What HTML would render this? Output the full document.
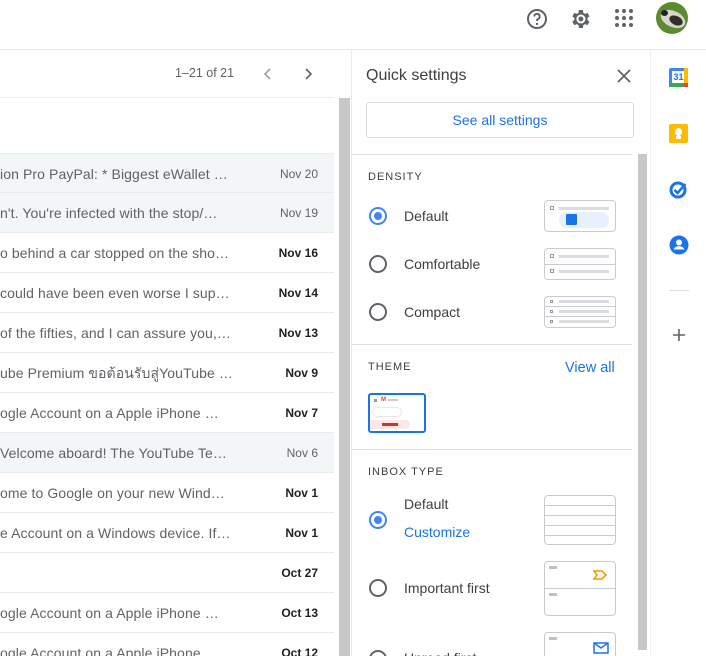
<!DOCTYPE html>
<html><head><meta charset="utf-8"><style>
*{box-sizing:border-box;margin:0;padding:0}
html,body{width:706px;height:656px;overflow:hidden}
body{background:#fff;font-family:"Liberation Sans","Noto Sans CJK SC",sans-serif;position:relative;color:#202124}
.a{position:absolute}
.row{position:absolute;left:0;width:334px;height:40px;border-bottom:1px solid #e8eaed;font-size:14px;color:#5f6368;line-height:40px;white-space:nowrap;overflow:hidden}
.row.r{background:#f2f6f6}
.row .t{position:absolute;left:0;letter-spacing:.1px}
.row .d{position:absolute;right:16px;font-size:12px;color:#5f6368}
.row.u .d{font-weight:bold;color:#202124}
.lbl{font-size:11px;letter-spacing:1px;color:#3c4043;font-weight:500}
.opt{font-size:14px;color:#3c4043}
.rad{position:absolute;width:18px;height:18px;border-radius:50%;border:2px solid #5f6368}
.rad.on{border-color:#4285f4}
.rad.on:after{content:"";position:absolute;left:3px;top:3px;width:8px;height:8px;border-radius:50%;background:#4285f4}
.box{position:absolute;border:1px solid #c8cbd0;border-radius:4px;background:#fff}
.sep{position:absolute;left:352px;width:280px;height:1px;background:#e0e0e0}
</style></head><body>
<svg class="a" style="left:525px;top:7px" width="24" height="24" viewBox="0 0 24 24"><circle cx="12" cy="12" r="9" fill="none" stroke="#5f6368" stroke-width="2"/><path d="M9.3 9.5a2.7 2.7 0 1 1 3.7 2.5c-.7.3-1 .8-1 1.5v.5" fill="none" stroke="#5f6368" stroke-width="2"/><circle cx="12" cy="17" r="1.2" fill="#5f6368"/></svg>
<svg class="a" style="left:568px;top:7px" width="24" height="24" viewBox="0 0 24 24"><path fill="#5f6368" d="M19.4 13a7.5 7.5 0 0 0 0-2l2.1-1.6-2-3.5-2.5 1a7 7 0 0 0-1.7-1L14.9 3h-4l-.4 2.9a7 7 0 0 0-1.7 1l-2.5-1-2 3.5L6.4 11a7.5 7.5 0 0 0 0 2l-2.1 1.6 2 3.5 2.5-1a7 7 0 0 0 1.7 1l.4 2.9h4l.4-2.9a7 7 0 0 0 1.7-1l2.5 1 2-3.5zM12.9 16.5a4.5 4.5 0 1 1 0-9 4.5 4.5 0 0 1 0 9z"/><circle cx="12.9" cy="12" r="2.5" fill="#5f6368"/></svg>
<svg class="a" style="left:614px;top:8px" width="20" height="20" viewBox="0 0 20 20" fill="#5f6368"><circle cx="3" cy="3" r="2"/><circle cx="10" cy="3" r="2"/><circle cx="17" cy="3" r="2"/><circle cx="3" cy="10" r="2"/><circle cx="10" cy="10" r="2"/><circle cx="17" cy="10" r="2"/><circle cx="3" cy="17" r="2"/><circle cx="10" cy="17" r="2"/><circle cx="17" cy="17" r="2"/></svg>
<div class="a" style="left:656px;top:2px;width:32px;height:32px;border-radius:50%;overflow:hidden;background:#5c8a2e"><div class="a" style="left:4px;top:9px;width:26px;height:16px;border-radius:50%;background:#d5d5cc;transform:rotate(25deg)"></div><div class="a" style="left:13px;top:14px;width:14px;height:9px;border-radius:50%;background:#2f2f28;transform:rotate(25deg)"></div><div class="a" style="left:5px;top:8px;width:7px;height:6px;border-radius:50%;background:#222"></div></div>
<div class="a" style="left:0;top:49px;width:706px;height:1px;background:#e8eaed"></div>
<div class="a" style="left:175px;top:66px;font-size:12.5px;color:#5f6368">1–21 of 21</div>
<svg class="a" style="left:262px;top:67px" width="12" height="14" viewBox="0 0 12 14"><path d="M8 2L3 7l5 5" fill="none" stroke="#9aa0a6" stroke-width="1.6"/></svg>
<svg class="a" style="left:302px;top:67px" width="12" height="14" viewBox="0 0 12 14"><path d="M4 2l5 5-5 5" fill="none" stroke="#5f6368" stroke-width="1.6"/></svg>
<div class="a" style="left:0;top:97px;width:334px;height:1px;background:#eceff1"></div>
<div class="a" style="left:339px;top:98px;width:11px;height:558px;background:#c8c8c8"></div>
<div class="row r" style="top:153px;border-top:1px solid #e8eaed"><span class="t">ion Pro PayPal: * Biggest eWallet …</span><span class="d">Nov 20</span></div>
<div class="row r" style="top:193px"><span class="t">n't. You're infected with the stop/…</span><span class="d">Nov 19</span></div>
<div class="row u" style="top:233px"><span class="t">o behind a car stopped on the sho…</span><span class="d">Nov 16</span></div>
<div class="row u" style="top:273px"><span class="t">could have been even worse I sup…</span><span class="d">Nov 14</span></div>
<div class="row u" style="top:313px"><span class="t">of the fifties, and I can assure you,…</span><span class="d">Nov 13</span></div>
<div class="row u" style="top:353px"><span class="t">ube Premium ขอต้อนรับสู่YouTube …</span><span class="d">Nov 9</span></div>
<div class="row u" style="top:393px"><span class="t">ogle Account on a Apple iPhone …</span><span class="d">Nov 7</span></div>
<div class="row r" style="top:433px"><span class="t">Velcome aboard! The YouTube Te…</span><span class="d">Nov 6</span></div>
<div class="row u" style="top:473px"><span class="t">ome to Google on your new Wind…</span><span class="d">Nov 1</span></div>
<div class="row u" style="top:513px"><span class="t">e Account on a Windows device. If…</span><span class="d">Nov 1</span></div>
<div class="row u" style="top:553px"><span class="t"></span><span class="d">Oct 27</span></div>
<div class="row u" style="top:593px"><span class="t">ogle Account on a Apple iPhone …</span><span class="d">Oct 13</span></div>
<div class="row u" style="top:633px"><span class="t">ogle Account on a Apple iPhone …</span><span class="d">Oct 12</span></div>
<div class="a" style="left:351px;top:50px;width:1px;height:606px;background:#e8eaed"></div>
<div class="a" style="left:366px;top:67px;font-size:16px;color:#3c4043">Quick settings</div>
<svg class="a" style="left:617px;top:69px" width="14" height="14" viewBox="0 0 14 14"><path d="M1 1l12 12M13 1L1 13" stroke="#5f6368" stroke-width="1.8"/></svg>
<div class="a" style="left:366px;top:102px;width:268px;height:36px;border:1px solid #dadce0;border-radius:4px;text-align:center;line-height:34px;font-size:14px;color:#1a73e8;font-weight:500">See all settings</div>
<div class="sep" style="top:154px"></div>
<div class="a" style="left:638px;top:154px;width:9px;height:496px;background:#c8c8c8"></div>
<div class="a lbl" style="left:368px;top:171px">DENSITY</div>
<div class="rad on" style="left:369px;top:207px"></div><div class="a opt" style="left:404px;top:208px">Default</div>
<div class="rad" style="left:369px;top:255px"></div><div class="a opt" style="left:404px;top:256px">Comfortable</div>
<div class="rad" style="left:369px;top:303px"></div><div class="a opt" style="left:404px;top:304px">Compact</div>
<div class="box" style="left:544px;top:200px;width:72px;height:32px"><div class="a" style="left:5px;top:5px;width:4px;height:4px;border:1px solid #999"></div><div class="a" style="left:14px;top:6px;width:50px;height:3px;background:#dadce0"></div><div class="a" style="left:14px;top:11px;width:50px;height:16px;border-radius:8px;background:#e8f0fe"></div><div class="a" style="left:21px;top:13px;width:11px;height:11px;background:#1a73e8;border-radius:1px"></div></div>
<div class="box" style="left:544px;top:248px;width:72px;height:32px"><div class="a" style="left:0;top:15px;width:70px;height:1px;background:#c8cbd0"></div><div class="a" style="left:5px;top:5px;width:4px;height:4px;border:1px solid #999"></div><div class="a" style="left:14px;top:6px;width:50px;height:3px;background:#dadce0"></div><div class="a" style="left:5px;top:20px;width:4px;height:4px;border:1px solid #999"></div><div class="a" style="left:14px;top:21px;width:50px;height:3px;background:#dadce0"></div></div>
<div class="box" style="left:544px;top:296px;width:72px;height:32px"><div class="a" style="left:0;top:9px;width:70px;height:1px;background:#c8cbd0"></div><div class="a" style="left:0;top:19px;width:70px;height:1px;background:#c8cbd0"></div><div class="a" style="left:5px;top:3px;width:3px;height:3px;border:1px solid #999"></div><div class="a" style="left:5px;top:13px;width:3px;height:3px;border:1px solid #999"></div><div class="a" style="left:5px;top:23px;width:3px;height:3px;border:1px solid #999"></div><div class="a" style="left:14px;top:3px;width:50px;height:3px;background:#dadce0"></div><div class="a" style="left:14px;top:13px;width:50px;height:3px;background:#dadce0"></div><div class="a" style="left:14px;top:23px;width:50px;height:3px;background:#dadce0"></div></div>
<div class="sep" style="top:344px"></div>
<div class="a lbl" style="left:368px;top:361px">THEME</div>
<div class="a" style="left:565px;top:360px;font-size:14.5px;color:#1a73e8;font-weight:500">View all</div>
<div class="a" style="left:368px;top:393px;width:58px;height:40px;border:2px solid #1a73e8;border-radius:3px;background:#fff;overflow:hidden"><div class="a" style="left:4px;top:4px;width:3px;height:3px;background:#999"></div><div class="a" style="left:11px;top:2px;font-size:6px;color:#ea4335;font-weight:bold">M</div><div class="a" style="left:18px;top:4px;width:10px;height:2px;background:#ccc"></div><div class="a" style="left:3px;top:13px;width:28px;height:8px;border-radius:4px;box-shadow:0 0 2px #bbb"></div><div class="a" style="left:0;top:25px;width:40px;height:9px;border-radius:0 5px 5px 0;background:#fce8e6"></div><div class="a" style="left:12px;top:28px;width:16px;height:3px;background:#d93025"></div></div>
<div class="sep" style="top:449px"></div>
<div class="a lbl" style="left:368px;top:466px">INBOX TYPE</div>
<div class="rad on" style="left:369px;top:511px"></div><div class="a opt" style="left:404px;top:496px">Default</div>
<div class="a" style="left:404px;top:524px;font-size:14px;color:#1a73e8;font-weight:500">Customize</div>
<div class="box" style="left:544px;top:495px;width:72px;height:50px"><div class="a" style="left:0;top:9px;width:70px;height:1px;background:#c8cbd0"></div><div class="a" style="left:0;top:19px;width:70px;height:1px;background:#c8cbd0"></div><div class="a" style="left:0;top:29px;width:70px;height:1px;background:#c8cbd0"></div><div class="a" style="left:0;top:39px;width:70px;height:1px;background:#c8cbd0"></div></div>
<div class="rad" style="left:369px;top:579px"></div><div class="a opt" style="left:404px;top:580px">Important first</div>
<div class="box" style="left:544px;top:561px;width:72px;height:55px"><div class="a" style="left:0;top:26px;width:70px;height:1px;background:#c8cbd0"></div><div class="a" style="left:4px;top:4px;width:8px;height:3px;background:#bdc1c6"></div><div class="a" style="left:4px;top:31px;width:8px;height:3px;background:#bdc1c6"></div><svg class="a" style="left:48px;top:8px" width="14" height="10" viewBox="0 0 14 10"><path d="M1 1h8l4 4-4 4H1l3-4z" fill="none" stroke="#f29900" stroke-width="1.6"/></svg></div>
<div class="rad" style="left:369px;top:650px"></div><div class="a opt" style="left:404px;top:650px">Unread first</div>
<div class="box" style="left:544px;top:632px;width:72px;height:40px"><div class="a" style="left:4px;top:4px;width:8px;height:3px;background:#bdc1c6"></div><svg class="a" style="left:48px;top:9px" width="16" height="12" viewBox="0 0 16 12"><rect x="1" y="1" width="14" height="10" fill="none" stroke="#1a73e8" stroke-width="1.5"/><path d="M1 1l7 5 7-5" fill="none" stroke="#1a73e8" stroke-width="1.5"/></svg></div>
<div class="a" style="left:650px;top:50px;width:1px;height:606px;background:#eceff1"></div>
<div class="a" style="left:669px;top:68px;width:19px;height:19px;border-radius:2px;background:#4285f4"><div class="a" style="left:3px;top:3px;width:13px;height:12px;background:#fff;font-size:9px;color:#1a73e8;text-align:center;line-height:13px;font-weight:bold">31</div><div class="a" style="left:0;top:15px;width:15px;height:4px;background:#34a853"></div><div class="a" style="left:15px;top:0;width:4px;height:15px;background:#fbbc04"></div><div class="a" style="left:15px;top:15px;width:4px;height:4px;background:#ea4335"></div></div>
<div class="a" style="left:669px;top:124px;width:19px;height:19px;border-radius:2px;background:#fbbc04"><div class="a" style="left:6px;top:4px;width:7px;height:8px;border-radius:50%;background:#fff"></div><div class="a" style="left:7px;top:12px;width:5px;height:3px;background:#fff"></div></div>
<svg class="a" style="left:668px;top:179px" width="22" height="22" viewBox="0 0 22 22"><circle cx="10" cy="11" r="7" fill="none" stroke="#1a73e8" stroke-width="3"/><path d="M6.5 11l3 3 8-9" fill="none" stroke="#1a73e8" stroke-width="2.6"/></svg>
<svg class="a" style="left:669px;top:235px" width="20" height="20" viewBox="0 0 20 20"><circle cx="10" cy="10" r="9.5" fill="#1a73e8"/><circle cx="10" cy="7.5" r="3" fill="#fff"/><path d="M4.5 14.5c1-2.5 3-3.3 5.5-3.3s4.5.8 5.5 3.3z" fill="#fff"/></svg>
<div class="a" style="left:669px;top:290px;width:20px;height:1px;background:#dadce0"></div>
<svg class="a" style="left:672px;top:328px" width="14" height="14" viewBox="0 0 14 14"><path d="M7 1v12M1 7h12" stroke="#5f6368" stroke-width="1.6"/></svg>
</body></html>
